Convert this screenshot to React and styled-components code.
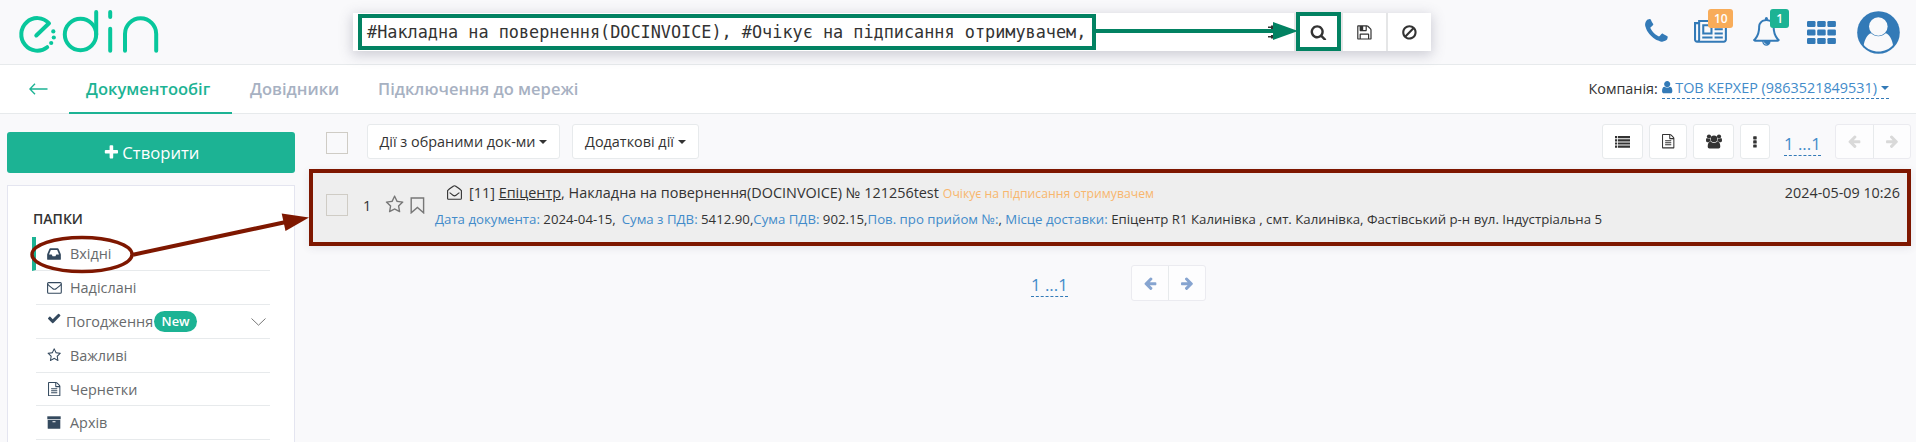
import React from 'react';
import styled, { createGlobalStyle } from 'styled-components';

const GREEN = '#1cb394';
const BLUE = '#337ab7';
const LINK = '#428bca';
const LINE = '#e7eaec';
const MARK_GREEN = '#028262';
const MARK_RED = '#7e1700';

const Global = createGlobalStyle`
  * { box-sizing: border-box; }
  body {
    margin: 0;
    background: #f9f9fb;
    color: #333;
    font: 14.4px "Open Sans", sans-serif;
    overflow: hidden;
  }
  svg { display: block; flex: none; }
`;

/* ---------- icons ---------- */

const PATHS = {
  search: 'M1216 832q0-185-131.5-316.5t-316.5-131.5-316.5 131.5-131.5 316.5 131.5 316.5 316.5 131.5 316.5-131.5 131.5-316.5zm512 832q0 52-38 90t-90 38q-54 0-90-38l-343-342q-179 124-399 124-143 0-273.5-55.5t-225-150-150-225-55.5-273.5 55.5-273.5 150-225 225-150 273.5-55.5 273.5 55.5 225 150 150 225 55.5 273.5q0 220-124 399l343 343q37 37 37 90z',
  phone: 'M1600 1240q0 27-10 70.5t-21 68.5q-21 50-122 106-94 51-186 51-27 0-52.5-3.5t-57.5-12.5-47.5-14.5-55.5-20.5-49-18q-98-35-175-83-128-79-264.5-215.5t-215.5-264.5q-48-77-83-175-3-9-18-49t-20.5-55.5-14.5-47.5-12.5-57.5-3.5-52.5q0-92 51-186 56-101 106-122 25-11 68.5-21t70.5-10q14 0 21 3 18 6 53 76 11 19 30 54t35 63.5 31 53.5q3 4 17.5 25t21.5 35.5 7 28.5q0 20-28.5 50t-62 55-62 53-28.5 46q0 9 5 22.5t8.5 20.5 14 24 11.5 19q76 137 174 235t235 174q2 1 19 11.5t24 14 20.5 8.5 22.5 5q18 0 46-28.5t53-62 55-62 50-28.5q14 0 28.5 7t35.5 21.5 25 17.5q25 15 53.5 31t63.5 35 54 30q70 35 76 53 3 7 3 21z',
  plus: 'M1600 736v192q0 40-28 68t-68 28h-416v416q0 40-28 68t-68 28h-192q-40 0-68-28t-28-68v-416h-416q-40 0-68-28t-28-68v-192q0-40 28-68t68-28h416v-416q0-40 28-68t68-28h192q40 0 68 28t28 68v416h416q40 0 68 28t28 68z',
  ban: 'M1440 893q0-161-87-295l-754 753q137 89 297 89 111 0 211.5-43.5t173.5-116.5 116-174.5 43-212.5zm-999 299l755-754q-135-91-300-91-148 0-273 73t-198 199-73 274q0 162 89 299zm1223-299q0 157-61 300t-163.5 246-245 164-298.5 61-298.5-61-245-164-163.5-246-61-300 61-299.5 163.5-245.5 245-164 298.5-61 298.5 61 245 164 163.5 245.5 61 299.5z',
  save: 'M512 1536h768v-384h-768v384zm896 0h128v-896q0-14-10-38.5t-20-34.5l-281-281q-10-10-34-20t-39-10v416q0 40-28 68t-68 28h-576q-40 0-68-28t-28-68v-416h-128v1280h128v-416q0-40 28-68t68-28h832q40 0 68 28t28 68v416zm-384-928v-320q0-13-9.5-22.5t-22.5-9.5h-192q-13 0-22.5 9.5t-9.5 22.5v320q0 13 9.5 22.5t22.5 9.5h192q13 0 22.5-9.5t9.5-22.5zm640 32v928q0 40-28 68t-68 28h-1344q-40 0-68-28t-28-68v-1344q0-40 28-68t68-28h928q40 0 88 20t76 48l280 280q28 28 48 76t20 88z',
  news: 'M1024 512h-384v384h384v-384zm128 640v128h-640v-128h640zm0-768v640h-640v-640h640zm640 768v128h-512v-128h512zm0-256v128h-512v-128h512zm0-256v128h-512v-128h512zm0-256v128h-512v-128h512zm-1536 960v-960h-128v960q0 26 19 45t45 19 45-19 19-45zm1664 0v-1088h-1536v1088q0 33-11 64h1483q26 0 45-19t19-45zm128-1216v1216q0 80-56 136t-136 56h-1664q-80 0-136-56t-56-136v-1088h256v-128h1792z',
  bell: 'M912 1696q0-16-16-16-59 0-101.5-42.5t-42.5-101.5q0-16-16-16t-16 16q0 73 51.5 124.5t124.5 51.5q16 0 16-16zm-666-288h1300q-266-300-266-832 0-51-24-105t-69-103-121.5-80.5-169.5-31.5-169.5 31.5-121.5 80.5-69 103-24 105q0 532-266 832zm1482 0q0 52-38 90t-90 38h-448q0 106-75 181t-181 75-181-75-75-181h-448q-52 0-90-38t-38-90q50-42 91-88t85-119.5 74.5-158.5 50-206 19.5-260q0-152 117-282.5t307-158.5q-8-19-8-39 0-40 28-68t68-28 68 28 28 68q0 20-8 39 190 28 307 158.5t117 282.5q0 139 19.5 260t50 206 74.5 158.5 85 119.5 91 88z',
  user: 'M1536 1399q0 109-62.5 187t-150.5 78h-854q-88 0-150.5-78t-62.5-187q0-85 8.5-160.5t31.5-152 58.5-131 94-89 134.5-34.5q131 128 313 128t313-128q76 0 134.5 34.5t94 89 58.5 131 31.5 152 8.5 160.5zm-256-887q0 159-112.5 271.5t-271.5 112.5-271.5-112.5-112.5-271.5 112.5-271.5 271.5-112.5 271.5 112.5 112.5 271.5z',
  file: 'M1596 380q28 28 48 76t20 88v1152q0 40-28 68t-68 28h-1344q-40 0-68-28t-28-68v-1600q0-40 28-68t68-28h896q40 0 88 20t76 48zm-444-244v376h376q-10-29-22-41l-313-313q-12-12-41-22zm384 1528v-1024h-416q-40 0-68-28t-28-68v-416h-768v1536h1280zm-1024-864q0-14 9-23t23-9h704q14 0 23 9t9 23v64q0 14-9 23t-23 9h-704q-14 0-23-9t-9-23v-64zm736 224q14 0 23 9t9 23v64q0 14-9 23t-23 9h-704q-14 0-23-9t-9-23v-64q0-14 9-23t23-9h704zm0 256q14 0 23 9t9 23v64q0 14-9 23t-23 9h-704q-14 0-23-9t-9-23v-64q0-14 9-23t23-9h704z',
  star: 'M1201 1004l306-297-422-62-189-382-189 382-422 62 306 297-73 421 378-199 377 199zm527-357q0 22-26 48l-363 354 86 500q1 7 1 20 0 50-41 50-19 0-40-12l-449-236-449 236q-22 12-40 12-21 0-31.5-14.5t-10.5-35.5q0-6 2-20l86-500-364-354q-25-27-25-48 0-37 56-46l502-73 225-455q19-41 49-41t49 41l225 455 502 73q56 9 56 46z',
  inbox: 'M1151 960h316q-1-3-2.5-8t-2.5-8l-212-496h-708l-212 496q-1 2-2.5 8t-2.5 8h316l95 192h320zm513 30v482q0 26-19 45t-45 19h-1408q-26 0-45-19t-19-45v-482q0-62 25-123l238-552q10-25 36.5-42t52.5-17h832q26 0 52.5 17t36.5 42l238 552q25 61 25 123z',
  check: 'M1671 566q0 40-28 68l-724 724-136 136q-28 28-68 28t-68-28l-136-136-362-362q-28-28-28-68t28-68l136-136q28-28 68-28t68 28l294 295 656-657q28-28 68-28t68 28l136 136q28 28 28 68z',
  arrow: 'M1664 896v128q0 53-32.5 90.5t-84.5 37.5h-704l293 294q38 36 38 90t-38 90l-75 76q-37 37-90 37-52 0-91-37l-651-652q-37-37-37-90 0-52 37-91l651-650q38-38 91-38 52 0 90 38l75 74q38 38 38 91t-38 91l-293 293h704q52 0 84.5 37.5t32.5 90.5z',
};

const Fa = ({ name, size = 14.4, box = 1792, flip }) => (
  <svg width={(size * box) / 1792} height={size} viewBox={`0 0 ${box} 1792`} fill="currentColor">
    <path d={PATHS[name]} transform={flip ? 'translate(1792 0) scale(-1 1)' : undefined} />
  </svg>
);

const Logo = () => (
  <svg width="142" height="46" viewBox="18 9 142 46" fill="none" stroke="#08c79c" strokeWidth="4" strokeLinecap="round" strokeLinejoin="round">
    <path d="M36.3 35.5 L49 23.3 A16 16.3 0 1 0 47.2 47.2" />
    <circle cx="80.5" cy="34.5" r="15.7" />
    <path d="M96.2 12v22.5M110.2 12v5M110.2 28.8v22M125 50.8V34a15.6 15.7 0 0 1 31.2 0v16.8" />
    <g fill="#08c79c" stroke="none">
      <circle cx="53.3" cy="31.4" r="2.1" /><circle cx="53.8" cy="37.5" r="2.1" /><circle cx="51.2" cy="43" r="2.1" />
    </g>
  </svg>
);

const Sliders = () => (
  <svg width="15" height="15" viewBox="0 0 15 15" fill="currentColor">
    <path d="M0 1.500h3v-1h3v3.400H3v-1H0zM0 11h3v-1h3v3.400H3v-1H0zM0 6.300h9v1.400H0z" />
  </svg>
);

const Grid = () => (
  <svg width="29" height="23" viewBox="0 0 29 23" fill="currentColor">
    {[0, 8.5, 17].map((y) => [0, 10.2, 20.4].map((x) => <rect key={x + '-' + y} x={x} y={y} width="8.5" height="6" rx="1.2" />))}
  </svg>
);

const Avatar = () => (
  <svg width="43" height="43" viewBox="0 0 43 43">
    <circle cx="21.5" cy="21.5" r="21.3" fill={BLUE} />
    <circle cx="21.3" cy="15.5" r="9.3" fill="#f9f9fb" />
    <path d="M6.8 34c.8-5.500 3.600-10.500 7.200-11.700 2.300 2 4.600 2.900 7.400 2.900s5-.9 7.300-2.900c3.700 1.200 6.500 6.200 7.300 11.700-3.500 4.200-8.800 6.500-14.600 6.500S10.300 38.200 6.800 34z" fill="#f9f9fb" />
  </svg>
);

const ThinArrow = () => (
  <svg width="19" height="12" viewBox="0 0 19 12" fill="none" stroke={GREEN} strokeWidth="1.4">
    <path d="M6 .8.9 6 6 11.2M1 6h17.500" />
  </svg>
);

const ListIcon = () => (
  <svg width="15" height="12" viewBox="0 0 15 12" fill="currentColor">
    {[0, 3.2, 6.4, 9.6].map((y) => <path key={y} d={`M0 ${y}h2.200v2.200H0zM3 ${y}h12v2.200H3z`} />)}
  </svg>
);

const UsersIcon = () => (
  <svg width="16" height="15" viewBox="0 0 16 15" fill="currentColor">
    <circle cx="8" cy="4.9" r="3.3" />
    <circle cx="3" cy="2.6" r="2.1" /><circle cx="13" cy="2.6" r="2.1" />
    <path d="M3.400 14.500c-1 0-1.700-.7-1.700-1.900 0-2.700.9-5 2.900-5 .8.900 2 1.400 3.400 1.400s2.600-.5 3.400-1.400c2 0 2.900 2.300 2.900 5 0 1.200-.7 1.900-1.700 1.900zM0 6.300C0 4.800.4 4 1.100 4c.9.9 2 1 3 .8 0 1 .3 1.800.8 2.500-.9 0-1.700.3-2.300.9H1.300C.5 8.200 0 7.500 0 6.300zM16 6.300c0-1.500-.4-2.300-1.100-2.300-.9.900-2 1-3 .8 0 1-.3 1.800-.8 2.500.9 0 1.700.3 2.300.9h1.300c.8 0 1.300-.7 1.300-1.900z" />
  </svg>
);

const DotsIcon = () => (
  <svg width="4" height="12" viewBox="0 0 4 12" fill="currentColor">
    {[0.2, 4.3, 8.4].map((y) => <rect key={y} x="0.2" y={y} width="3.5" height="3.2" rx="0.6" />)}
  </svg>
);

const Envelope = () => (
  <svg width="15" height="12" viewBox="0 0 15 12" fill="none" stroke="currentColor" strokeWidth="1.1">
    <rect x=".6" y=".6" width="13.7" height="10.6" rx="1" />
    <path d="M.8 2.300c1.500 1.700 3.200 2.900 4.800 4.200 1.500 1.200 2.300 1.200 3.800 0 1.600-1.300 3.300-2.500 4.800-4.200" />
  </svg>
);

const OpenEnvelope = () => (
  <svg width="15" height="15" viewBox="0 0 15 15" fill="none" stroke="currentColor" strokeWidth="1.1">
    <path d="M.600 5.600C2.500 3.800 4.500 2.500 6.200 1.200c.9-.6 1.700-.6 2.600 0 1.700 1.300 3.700 2.600 5.600 4.400v7.600c0 .7-.4 1.100-1.100 1.100H1.700c-.7 0-1.100-.4-1.100-1.100z" />
    <path d="M2.600 7.700c1.200 1 2.500 1.900 3.500 2.600.9.700 1.900.7 2.800 0 1-.7 2.300-1.600 3.500-2.600" />
  </svg>
);

const Archive = () => (
  <svg width="14" height="13" viewBox="0 0 14 13" fill="currentColor">
    <path d="M.3.3h13.400v3H.3z" />
    <path fillRule="evenodd" d="M.7 4h12.600v8.200q0 .5-.5.500H1.200q-.5 0-.5-.5zM5.500 5.200v1h3v-1z" />
  </svg>
);

const Bookmark = () => (
  <svg width="15" height="17" viewBox="0 0 15 17" fill="none" stroke="currentColor" strokeWidth="1.4">
    <path d="M1.200 1h12.400v14.800L7.400 10.400 1.200 15.800z" />
  </svg>
);

const Chevron = () => (
  <svg width="15" height="8" viewBox="0 0 15 8" fill="none" stroke="#777" strokeWidth="1">
    <path d="M.5.5 7.500 7.200 14.500.5" />
  </svg>
);

const Caret = styled.i`
  border: ${(p) => p.$size || 4}px solid transparent;
  border-top-color: currentColor;
  border-bottom: 0;
  margin-left: 4px;
  flex: none;
`;

/* ---------- header ---------- */

const Header = styled.header`
  height: 65px;
  border-bottom: 1px solid ${LINE};
  display: flex;
  align-items: flex-start;
  padding: 9px 16px 0 18px;
`;

const SearchBar = styled.div`
  margin: 4px 0 0 193px;
  width: 1078px;
  height: 38px;
  display: flex;
  background: #fff;
  box-shadow: 0 3px 12px 1px rgba(70, 70, 100, 0.25);
`;

const Query = styled.div`
  flex: 1;
  display: flex;
  align-items: center;
  justify-content: space-between;
  padding: 0 11px 0 14px;
  font: 16.83px "DejaVu Sans Mono", monospace;
  white-space: pre;
`;

const SearchButton = styled.div`
  width: ${(p) => p.$w}px;
  display: flex;
  align-items: center;
  justify-content: center;
  border-left: 2px solid #e5e6e7;
`;

const HeaderIcons = styled.div`
  margin-left: auto;
  display: flex;
  align-items: flex-start;
  color: ${BLUE};
`;

const IconSlot = styled.div`
  position: relative;
  margin: ${(p) => p.$top}px ${(p) => p.$gap}px 0 0;
`;

const Badge = styled.span`
  position: absolute;
  left: ${(p) => p.$x}px;
  top: ${(p) => p.$y}px;
  width: ${(p) => p.$w}px;
  height: 19px;
  border-radius: 3px;
  background: ${(p) => p.$bg};
  color: #fff;
  font-size: 12px;
  font-weight: 600;
  line-height: 19px;
  text-align: center;
`;

/* ---------- navigation ---------- */

const Nav = styled.nav`
  height: 49px;
  background: #fff;
  border-bottom: 1px solid ${LINE};
  display: flex;
  align-items: stretch;
  padding: 0 27px 0 29px;
`;

const Back = styled.div`
  width: 40px;
  padding-top: 18px;
`;

const Tab = styled.div`
  height: 49px;
  padding: 0 ${(p) => (p.$active ? '20px 0 17px' : '0')};
  width: ${(p) => p.$w}px;
  margin-right: 18px;
  font-size: 16.5px;
  font-weight: 600;
  line-height: 48px;
  white-space: nowrap;
  color: ${(p) => (p.$active ? GREEN : '#a7b1c2')};
  border-bottom: ${(p) => (p.$active ? `2px solid ${GREEN}` : '0')};
`;

const Company = styled.div`
  margin-left: auto;
  display: flex;
  align-items: flex-start;
  line-height: 24px;
  padding-top: 12px;
`;

const CompanyLink = styled.span`
  display: flex;
  align-items: center;
  height: 22px;
  margin-left: 4px;
  color: ${BLUE};
  border-bottom: 1px dashed ${BLUE};
  svg { margin-left: -2px; margin-right: 1px; }
  span { color: ${LINK}; }
`;

/* ---------- sidebar ---------- */

const Body = styled.div`
  display: flex;
  height: 328px;
  overflow: hidden;
`;

const Sidebar = styled.aside`
  width: 288px;
  margin: 18px 14px 0 7px;
  flex: none;
`;

const Create = styled.div`
  height: 41px;
  border-radius: 3px;
  background: ${GREEN};
  color: #fff;
  display: flex;
  align-items: center;
  justify-content: center;
  gap: 3px;
  font-size: 16.65px;
`;

const Panel = styled.div`
  margin-top: 12px;
  height: 257px;
  background: #fff;
  border: 1px solid #e4e5f0;
  border-bottom: 0;
  padding: 21px 24px 0;
`;

const FoldersTitle = styled.div`
  font-weight: 600;
  line-height: 24px;
  height: 30px;
  padding-left: 1px;
  font-size: 14px;
`;

const Folder = styled.div`
  height: ${(p) => p.$h || 34}px;
  margin-left: ${(p) => (p.$active ? 0 : 4)}px;
  padding: 0 4px 0 10px;
  border-left: ${(p) => (p.$active ? `4px solid ${GREEN}` : '0')};
  border-bottom: 1px solid ${LINE};
  display: flex;
  align-items: center;
  color: #676a6c;
`;

const FolderIcon = styled.span`
  width: ${(p) => p.$w || 24}px;
  padding-left: ${(p) => p.$inset ?? 1}px;
  color: #34495e;
  margin-top: ${(p) => p.$shift || 0}px;
  display: flex;
`;

const NewTag = styled.span`
  height: 21px;
  width: 43px;
  margin-left: 1px;
  margin-right: auto;
  border-radius: 11px;
  background: ${GREEN};
  color: #fff;
  font-size: 12.9px;
  font-weight: 600;
  line-height: 21px;
  text-align: center;
`;

/* ---------- document list ---------- */

const Content = styled.main`
  width: 1602px;
  padding-top: 10px;
`;

const Toolbar = styled.div`
  height: 35px;
  display: flex;
  padding-left: 17px;
`;

const Checkbox = styled.span`
  width: 22px;
  height: 22px;
  margin-top: ${(p) => p.$top || 0}px;
  border: 1px solid #cfccc5;
  flex: none;
`;

const Button = styled.div`
  width: ${(p) => p.$w}px;
  height: 35px;
  margin-left: ${(p) => p.$ml || 0}px;
  border: 1px solid ${LINE};
  border-radius: 3px;
  background: #fff;
  display: flex;
  align-items: center;
  justify-content: center;
  white-space: nowrap;
`;

const PageRange = styled.span`
  align-self: flex-start;
  height: 25px;
  margin: 7px 0 0 ${(p) => p.$ml || 0}px;
  width: 37px;
  line-height: 26px;
  font-size: 16.8px;
  color: ${LINK};
  border-bottom: 1px dashed ${BLUE};
  white-space: nowrap;
`;

const Pager = styled.div`
  display: flex;
  width: ${(p) => p.$w}px;
  height: ${(p) => p.$h || 35}px;
  margin-left: ${(p) => p.$ml}px;
  border: 1px solid #ebebf0;
  border-radius: 3px;
  background: #fdfdfe;
  color: ${(p) => p.$color};
`;

const PagerHalf = styled.span`
  flex: 1;
  display: flex;
  align-items: center;
  justify-content: center;
  & + & { border-left: 1px solid ${LINE}; }
`;

const Row = styled.div`
  margin-top: 10px;
  height: 77px;
  border: 4px solid ${MARK_RED};
  background: #eee;
  display: flex;
  padding: 8px 7px 0 13px;
  box-shadow: 0 2px 8px rgba(60, 60, 90, 0.1);
`;

const RowTools = styled.div`
  display: flex;
  align-items: center;
  height: 48px;
  width: 109px;
  flex: none;
  color: #777;
`;

const RowNumber = styled.span`
  color: #333;
  width: 22px;
  margin-left: 15px;
`;

const Marks = styled.span`
  display: flex;
  align-items: center;
  gap: 6px;
`;

const Summary = styled.div`
  flex: 1;
  white-space: nowrap;
`;

const TitleLine = styled.div`
  display: flex;
  height: 26px;
  line-height: 24px;
  padding-left: 12px;
  font-size: 14.42px;
  svg { margin: 4px 7px 0 0; }
`;

const Partner = styled.span`
  text-decoration: underline;
`;

const Status = styled.span`
  margin-left: 4px;
  font-size: 12.24px;
  line-height: 25px;
  color: #f8b66d;
`;

const Stamp = styled.span`
  margin-left: auto;
  font-size: 14.35px;
`;

const Details = styled.div`
  font-size: 13.22px;
  line-height: 24px;
`;

const Key = styled.span`
  color: ${LINK};
  margin-left: ${(p) => p.$ml || 0}px;
`;

const Footer = styled.div`
  display: flex;
  margin: 19px 0 0 722px;
`;

/* ---------- callouts drawn over the page ---------- */

const Overlay = styled.svg`
  position: absolute;
  left: 0;
  top: 0;
  pointer-events: none;
`;

const Callouts = () => (
  <Overlay width="1916" height="442" viewBox="0 0 1916 442" fill="none">
    <g stroke={MARK_GREEN} strokeWidth="4">
      <rect x="360" y="16" width="734" height="32" />
      <rect x="1298" y="14" width="41" height="35" />
      <path d="M1096 31h180" />
    </g>
    <path d="M1273 22l25 9-25 9z" fill={MARK_GREEN} />
    <g stroke={MARK_RED}>
      <ellipse cx="82" cy="254.5" rx="50" ry="17" strokeWidth="3.4" />
      <path d="M133 254.700L286 222" strokeWidth="4" />
    </g>
    <path d="M281.700 213.600L309 217.500 285.500 231z" fill={MARK_RED} />
  </Overlay>
);

export default function App() {
  return (
    <>
      <Global />
      <Header>
        <Logo />
        <SearchBar>
          <Query>
            <span>#Накладна на повернення(DOCINVOICE), #Очікує на підписання отримувачем,</span>
            <Sliders />
          </Query>
          <SearchButton $w={47}><Fa name="search" size={16.8} /></SearchButton>
          <SearchButton $w={45}><Fa name="save" size={16.8} /></SearchButton>
          <SearchButton $w={45}><Fa name="ban" size={16.8} /></SearchButton>
        </SearchBar>
        <HeaderIcons>
          <IconSlot $top={7.5} $gap={24}><Fa name="phone" size={28.8} /></IconSlot>
          <IconSlot $top={9} $gap={25}>
            <Fa name="news" size={28.8} box={2048} />
            <Badge $x={14} $y={-9} $w={25} $bg="#f8ac59">10</Badge>
          </IconSlot>
          <IconSlot $top={8} $gap={26}>
            <Fa name="bell" size={28.8} />
            <Badge $x={18} $y={-8} $w={19} $bg={GREEN}>1</Badge>
          </IconSlot>
          <IconSlot $top={12} $gap={21}><Grid /></IconSlot>
          <IconSlot $top={2} $gap={0}><Avatar /></IconSlot>
        </HeaderIcons>
      </Header>

      <Nav>
        <Back><ThinArrow /></Back>
        <Tab $active $w={163}>Документообіг</Tab>
        <Tab $w={110}>Довідники</Tab>
        <Tab $w={210}>Підключення до мережі</Tab>
        <Company>
          Компанія:
          <CompanyLink>
            <Fa name="user" /><span>ТОВ КЕРХЕР (9863521849531)</span><Caret $size={4.5} />
          </CompanyLink>
        </Company>
      </Nav>

      <Body>
        <Sidebar>
          <Create><Fa name="plus" size={16.8} />Створити</Create>
          <Panel>
            <FoldersTitle>ПАПКИ</FoldersTitle>
            <Folder $active><FolderIcon $inset={0}><Fa name="inbox" size={16} /></FolderIcon>Вхідні</Folder>
            <Folder><FolderIcon><Envelope /></FolderIcon>Надіслані</Folder>
            <Folder>
              <FolderIcon $w={20} $shift={-6}><Fa name="check" /></FolderIcon>
              Погодження<NewTag>New</NewTag><Chevron />
            </Folder>
            <Folder><FolderIcon><Fa name="star" /></FolderIcon>Важливі</Folder>
            <Folder $h={33}><FolderIcon><Fa name="file" /></FolderIcon>Чернетки</Folder>
            <Folder><FolderIcon><Archive /></FolderIcon>Архів</Folder>
          </Panel>
        </Sidebar>

        <Content>
          <Toolbar>
            <Checkbox $top={8} />
            <Button $w={193} $ml={19}>Дії з обраними док-ми<Caret /></Button>
            <Button $w={127} $ml={12}>Додаткові дії<Caret /></Button>
            <Button $w={41} $ml={903}><ListIcon /></Button>
            <Button $w={38} $ml={6}><Fa name="file" /></Button>
            <Button $w={41} $ml={6}><UsersIcon /></Button>
            <Button $w={30} $ml={6}><DotsIcon /></Button>
            <PageRange $ml={14}>1 ...1</PageRange>
            <Pager $w={76} $ml={14} $color="#d9d9d9">
              <PagerHalf><Fa name="arrow" /></PagerHalf>
              <PagerHalf><Fa name="arrow" flip /></PagerHalf>
            </Pager>
          </Toolbar>

          <Row>
            <RowTools>
              <Checkbox />
              <RowNumber>1</RowNumber>
              <Marks><Fa name="star" size={19.2} /><Bookmark /></Marks>
            </RowTools>
            <Summary>
              <TitleLine>
                <OpenEnvelope />
                <span>[11] <Partner>Епіцентр</Partner>, Накладна на повернення(DOCINVOICE) № 121256test</span>
                <Status>Очікує на підписання отримувачем</Status>
                <Stamp>2024-05-09 10:26</Stamp>
              </TitleLine>
              <Details>
                <Key>Дата документа:</Key> 2024-04-15, <Key $ml={2.5}>Сума з ПДВ:</Key> 5412.90,<Key>Сума ПДВ:</Key> 902.15,
                <Key>Пов. про прийом №:</Key>, <Key>Місце доставки:</Key> Епіцентр R1 Калинівка , смт. Калинівка, Фастівський р-н вул. Індустріальна 5
              </Details>
            </Summary>
          </Row>

          <Footer>
            <PageRange>1 ...1</PageRange>
            <Pager $w={75} $h={36} $ml={63} $color="#86a4d0">
              <PagerHalf><Fa name="arrow" /></PagerHalf>
              <PagerHalf><Fa name="arrow" flip /></PagerHalf>
            </Pager>
          </Footer>
        </Content>
      </Body>
      <Callouts />
    </>
  );
}
